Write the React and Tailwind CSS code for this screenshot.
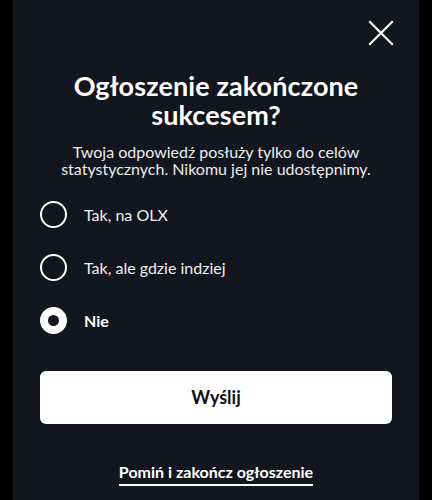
import React, { useState } from "react";

const options = [
  { id: "olx", label: "Tak, na OLX" },
  { id: "other", label: "Tak, ale gdzie indziej" },
  { id: "no", label: "Nie" },
];

const Radio = ({ checked }) => (
  <span
    className={
      "flex-shrink-0 w-[27px] h-[27px] rounded-full border-white " +
      (checked ? "border-[8px]" : "border-2")
    }
  />
);

export default function App() {
  const [selected, setSelected] = useState("no");

  return (
    <div className="w-full min-h-[500px] bg-black px-[13px] flex" style={{ fontFamily: "Lato, 'Noto Sans', sans-serif" }}>
      <div className="flex-1 bg-[#13161e] text-white flex flex-col px-[27px]">
        {/* close */}
        <div className="flex justify-end mt-[20px] -mr-[2px]">
          <button className="w-[26px] h-[26px] flex items-center justify-center" aria-label="Zamknij">
            <svg width="26" height="26" viewBox="0 0 26 26" fill="none" stroke="white" strokeWidth="2.2" strokeLinecap="square">
              <path d="M2 2 L24 24 M24 2 L2 24" />
            </svg>
          </button>
        </div>

        <h1 className="mt-[25px] text-center font-bold text-[27px] leading-[29px] tracking-[0.1px]">
          Ogłoszenie zakończone
          <br />
          sukcesem?
        </h1>

        <p className="mt-[14px] text-center text-[16px] leading-[17px] text-[#ececec] px-[4px]">
          Twoja odpowiedź posłuży tylko do celów statystycznych. Nikomu jej nie udostępnimy.
        </p>

        <div className="mt-[11px] flex flex-col">
          {options.map((o) => (
            <label
              key={o.id}
              onClick={() => setSelected(o.id)}
              className="flex items-center gap-[17px] h-[53px] cursor-pointer"
            >
              <Radio checked={selected === o.id} />
              <span className={"text-[16px] " + (selected === o.id ? "font-bold" : "text-[#f0f0f0]")}>
                {o.label}
              </span>
            </label>
          ))}
        </div>

        <button className="mt-[24px] h-[53px] w-full rounded-[6px] bg-white text-[#111] font-bold text-[18px]">
          Wyślij
        </button>

        <div className="mt-[38px] flex justify-center">
          <button className="font-bold text-[16px] leading-[20px] pb-[2px] border-b-2 border-white">
            Pomiń i zakończ ogłoszenie
          </button>
        </div>
      </div>
    </div>
  );
}
